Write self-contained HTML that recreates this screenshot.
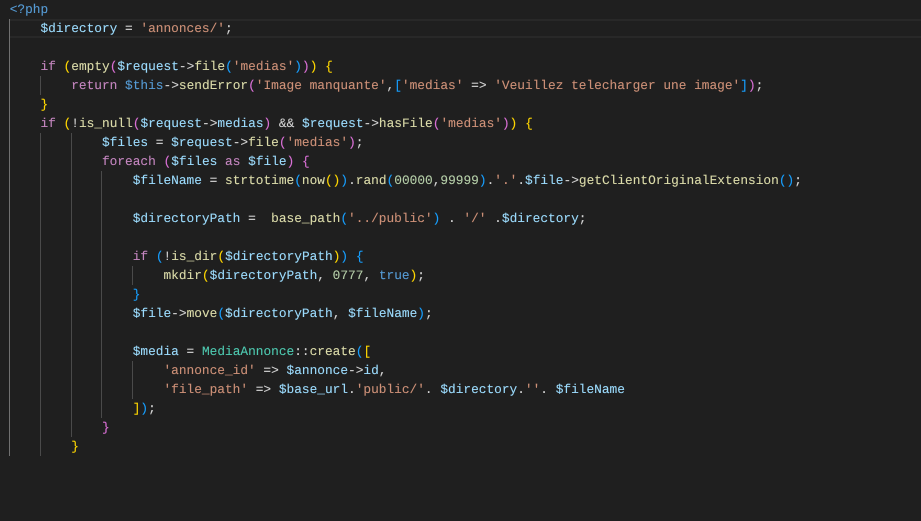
<!DOCTYPE html>
<html>
<head>
<meta charset="utf-8">
<style>
html,body{margin:0;padding:0;background:#1f1f1f;width:921px;height:521px;overflow:hidden}
#ed{position:relative;width:921px;height:521px;overflow:hidden;background:#1f1f1f}
pre{position:absolute;left:9.7px;top:0;margin:0;font-family:"Liberation Mono",monospace;font-size:12.825px;line-height:19px;color:#d4d4d4;white-space:pre;text-rendering:geometricPrecision;-webkit-text-stroke:0.1px currentColor}
.g{position:absolute;width:1px;background:#4a4a4a}
.a{position:absolute;left:10px;right:0;height:2px;background:#282828}
.v{color:#9cdcfe}.s{color:#ce9178}.f{color:#dcdcaa}.k{color:#c586c0}.t{color:#569cd6}.n{color:#b5cea8}.c{color:#4ec9b0}
.y{color:#ffd700}.o{color:#da70d6}.b{color:#179fff}
</style>
</head>
<body>
<div id="ed">
<div class="a" style="top:19px"></div>
<div class="a" style="top:36px"></div>
<div class="g" style="left:9px;top:19px;height:437px;background:#707070"></div>
<div class="g" style="left:40px;top:76px;height:19px"></div>
<div class="g" style="left:40px;top:133px;height:323px"></div>
<div class="g" style="left:71px;top:133px;height:304px"></div>
<div class="g" style="left:101px;top:171px;height:247px"></div>
<div class="g" style="left:132px;top:266px;height:19px"></div>
<div class="g" style="left:132px;top:361px;height:38px"></div>
<pre><span class="t">&lt;?php</span>
    <span class="v">$directory</span> = <span class="s">'annonces/'</span>;

    <span class="k">if</span> <span class="y">(</span><span class="f">empty</span><span class="o">(</span><span class="v">$request</span>-&gt;<span class="f">file</span><span class="b">(</span><span class="s">'medias'</span><span class="b">)</span><span class="o">)</span><span class="y">)</span> <span class="y">{</span>
        <span class="k">return</span> <span class="t">$this</span>-&gt;<span class="f">sendError</span><span class="o">(</span><span class="s">'Image manquante'</span>,<span class="b">[</span><span class="s">'medias'</span> =&gt; <span class="s">'Veuillez telecharger une image'</span><span class="b">]</span><span class="o">)</span>;
    <span class="y">}</span>
    <span class="k">if</span> <span class="y">(</span>!<span class="f">is_null</span><span class="o">(</span><span class="v">$request</span>-&gt;<span class="v">medias</span><span class="o">)</span> &amp;&amp; <span class="v">$request</span>-&gt;<span class="f">hasFile</span><span class="o">(</span><span class="s">'medias'</span><span class="o">)</span><span class="y">)</span> <span class="y">{</span>
            <span class="v">$files</span> = <span class="v">$request</span>-&gt;<span class="f">file</span><span class="o">(</span><span class="s">'medias'</span><span class="o">)</span>;
            <span class="k">foreach</span> <span class="o">(</span><span class="v">$files</span> <span class="k">as</span> <span class="v">$file</span><span class="o">)</span> <span class="o">{</span>
                <span class="v">$fileName</span> = <span class="f">strtotime</span><span class="b">(</span><span class="f">now</span><span class="y">()</span><span class="b">)</span>.<span class="f">rand</span><span class="b">(</span><span class="n">00000</span>,<span class="n">99999</span><span class="b">)</span>.<span class="s">'.'</span>.<span class="v">$file</span>-&gt;<span class="f">getClientOriginalExtension</span><span class="b">()</span>;

                <span class="v">$directoryPath</span> =  <span class="f">base_path</span><span class="b">(</span><span class="s">'../public'</span><span class="b">)</span> . <span class="s">'/'</span> .<span class="v">$directory</span>;

                <span class="k">if</span> <span class="b">(</span>!<span class="f">is_dir</span><span class="y">(</span><span class="v">$directoryPath</span><span class="y">)</span><span class="b">)</span> <span class="b">{</span>
                    <span class="f">mkdir</span><span class="y">(</span><span class="v">$directoryPath</span>, <span class="n">0777</span>, <span class="t">true</span><span class="y">)</span>;
                <span class="b">}</span>
                <span class="v">$file</span>-&gt;<span class="f">move</span><span class="b">(</span><span class="v">$directoryPath</span>, <span class="v">$fileName</span><span class="b">)</span>;

                <span class="v">$media</span> = <span class="c">MediaAnnonce</span>::<span class="f">create</span><span class="b">(</span><span class="y">[</span>
                    <span class="s">'annonce_id'</span> =&gt; <span class="v">$annonce</span>-&gt;<span class="v">id</span>,
                    <span class="s">'file_path'</span> =&gt; <span class="v">$base_url</span>.<span class="s">'public/'</span>. <span class="v">$directory</span>.<span class="s">''</span>. <span class="v">$fileName</span>
                <span class="y">]</span><span class="b">)</span>;
            <span class="o">}</span>
        <span class="y">}</span></pre>
</div>
</body>
</html>
